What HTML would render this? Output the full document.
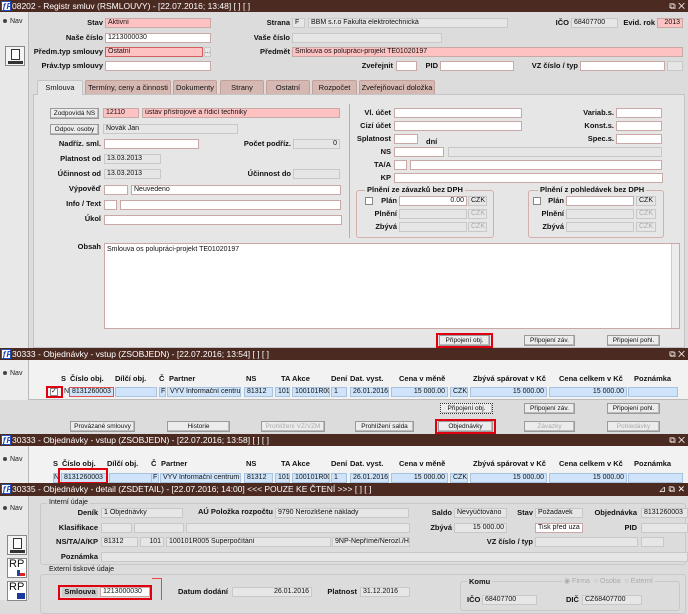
<!DOCTYPE html>
<html><head><meta charset="utf-8"><style>
*{box-sizing:border-box;margin:0;padding:0}
body{width:688px;height:600px;overflow:hidden;position:relative;background:#dcdcdc;font-family:"Liberation Sans",sans-serif;font-size:7.5px;color:#111}
div,span{position:absolute}
.t{left:0;width:688px;height:12px;background:#4b2a22;color:#fff;font-size:8.5px;line-height:12px;padding-left:12px;white-space:nowrap}
.t .lg{left:1px;top:1px;width:10px;height:10px;background:#fff;color:#1a3fb0;font-weight:bold;font-style:italic;font-size:8px;line-height:10px;text-align:center;padding:0;border:1px solid #2050c0}
.t .x{right:3px;top:0;color:#fff;font-size:9px}
.sb{left:0;width:29px;background:#e8e8e8;border-right:1px solid #b8b8b8}
.nav{left:3px;font-size:7px;color:#222}
.nav:before{content:"";display:inline-block;width:4px;height:4px;border-radius:50%;background:#444;margin-right:3px;vertical-align:middle}
.i{height:10px;background:#fff;border:1px solid #c9a9a5;line-height:8px;padding-left:2px;white-space:nowrap;overflow:hidden;font-size:7px}
.p{background:#ffc2c2}
.g{background:#e6e6e6;border-color:#c8c8c8}
.r{text-align:right;padding-right:2px}
.l{font-weight:bold;white-space:nowrap;text-align:right;font-size:7.5px;line-height:10px}
.b{height:11px;background:#ececec;border:1px solid #9a9a9a;text-align:center;line-height:9px;font-size:6.5px;box-shadow:inset -1px -1px 0 #bbb;white-space:nowrap;overflow:hidden}
.d{color:#aaa}
.rb{border:2px solid #e00010}
.tab{top:80px;height:14px;background:#d6b8b3;border:1px solid #c4a09a;border-bottom:none;text-align:center;line-height:13px;font-size:7.5px;border-radius:2px 2px 0 0;white-space:nowrap;overflow:hidden}
.fs{border:1px solid #d4b0ab;border-radius:3px}
.fl{font-weight:bold;background:#e6e6e6;padding:0 2px;font-size:7.5px;line-height:9px}
.h{font-weight:bold;font-size:7.5px;white-space:nowrap}
.c{height:10px;background:#cfe4fa;border:1px solid #a9c3de;line-height:8px;padding-left:2px;white-space:nowrap;overflow:hidden;font-size:7px}
.ck{width:8px;height:8px;background:#fff;border:1px solid #888}
</style></head><body>

<!-- Frame 1 -->
<div class="t" style="top:0"><span class="lg">ƒF</span>08202 - Registr smluv (RSMLOUVY) - [22.07.2016; 13:48] [ ] [ ]<span class="x">⧉ ✕</span></div>
<div class="sb" style="top:12px;height:336px"></div>
<div class="nav" style="top:18px">Nav</div>
<div style="left:5px;top:46px;width:20px;height:20px;background:#f4f4f4;border:1px solid #888"><div style="left:5px;top:2px;width:9px;height:11px;border:1px solid #333;background:#fff"></div><div style="left:2px;top:14px;width:15px;height:3px;background:#333"></div></div>

<div class="l" style="right:585px;top:18px">Stav</div><div class="i p" style="left:105px;top:18px;width:106px">Aktivní</div>
<div class="l" style="right:585px;top:33px">Naše číslo</div><div class="i" style="left:105px;top:33px;width:106px">1213000030</div>
<div class="l" style="right:585px;top:47px">Předm.typ smlouvy</div><div class="i p" style="left:105px;top:47px;width:98px;border-color:#d06060">Ostatní</div><div class="i g" style="left:204px;top:47px;width:7px;font-size:6px;padding:0">...</div>
<div class="l" style="right:585px;top:61px">Práv.typ smlouvy</div><div class="i" style="left:105px;top:61px;width:106px"></div>

<div class="l" style="right:398px;top:18px">Strana</div><div class="i g" style="left:292px;top:18px;width:13px">F</div><div class="i g" style="left:308px;top:18px;width:200px">BBM s.r.o Fakulta elektrotechnická</div>
<div class="l" style="right:119px;top:18px">IČO</div><div class="i g" style="left:571px;top:18px;width:47px">68407700</div>
<div class="l" style="right:33px;top:18px">Evid. rok</div><div class="i p r" style="left:657px;top:18px;width:26px">2013</div>
<div class="l" style="right:398px;top:33px">Vaše číslo</div><div class="i g" style="left:292px;top:33px;width:150px"></div>
<div class="l" style="right:398px;top:47px">Předmět</div><div class="i p" style="left:292px;top:47px;width:391px">Smlouva os polupráci-projekt TE01020197</div>
<div class="l" style="right:295px;top:61px">Zveřejnit</div><div class="i" style="left:396px;top:61px;width:21px"></div>
<div class="l" style="right:250px;top:61px">PID</div><div class="i" style="left:440px;top:61px;width:74px"></div>
<div class="l" style="right:110px;top:61px">VZ číslo / typ</div><div class="i" style="left:580px;top:61px;width:85px"></div><div class="i g" style="left:667px;top:61px;width:16px"></div>

<div style="left:33px;top:94px;width:652px;height:254px;background:#e6e6e6;border:1px solid #c4c4c4"></div>
<div class="tab" style="left:37px;width:46px;background:#e6e6e6;border-color:#c4c4c4;height:15px">Smlouva</div>
<div class="tab" style="left:85px;width:86px">Termíny, ceny a činnosti</div>
<div class="tab" style="left:173px;width:44px">Dokumenty</div>
<div class="tab" style="left:220px;width:44px">Strany</div>
<div class="tab" style="left:266px;width:44px">Ostatní</div>
<div class="tab" style="left:312px;width:45px">Rozpočet</div>
<div class="tab" style="left:359px;width:76px">Zveřejňovací doložka</div>

<div class="b" style="left:50px;top:108px;width:49px">Zodpovídá NS</div><div class="i p" style="left:103px;top:108px;width:36px">12110</div><div class="i p" style="left:142px;top:108px;width:198px">ústav přístrojové a řídicí techniky</div>
<div class="b" style="left:50px;top:124px;width:49px">Odpov. osoby</div><div class="i g" style="left:103px;top:124px;width:135px">Novák Jan</div>
<div class="l" style="right:587px;top:139px">Nadříz. sml.</div><div class="i" style="left:104px;top:139px;width:95px"></div>
<div class="l" style="right:397px;top:139px">Počet podříz.</div><div class="i g r" style="left:293px;top:139px;width:47px">0</div>
<div class="l" style="right:587px;top:154px">Platnost od</div><div class="i g" style="left:104px;top:154px;width:57px">13.03.2013</div>
<div class="l" style="right:587px;top:169px">Účinnost od</div><div class="i g" style="left:104px;top:169px;width:57px">13.03.2013</div>
<div class="l" style="right:397px;top:169px">Účinnost do</div><div class="i g" style="left:293px;top:169px;width:47px"></div>
<div class="l" style="right:587px;top:184px">Výpověď</div><div class="i" style="left:104px;top:185px;width:24px"></div><div class="i" style="left:131px;top:185px;width:210px">Neuvedeno</div>
<div class="l" style="right:587px;top:199px">Info / Text</div><div class="i" style="left:104px;top:200px;width:13px"></div><div class="i" style="left:120px;top:200px;width:221px"></div>
<div class="l" style="right:587px;top:214px">Úkol</div><div class="i" style="left:104px;top:215px;width:238px"></div>
<div style="left:349px;top:104px;width:1px;height:134px;background:#b0b0b0"></div>

<div class="l" style="right:297px;top:108px">Vl. účet</div><div class="i" style="left:394px;top:108px;width:128px"></div>
<div class="l" style="right:297px;top:121px">Cizí účet</div><div class="i" style="left:394px;top:121px;width:128px"></div>
<div class="l" style="right:297px;top:134px">Splatnost</div><div class="i" style="left:394px;top:134px;width:24px"></div><div class="l" style="left:426px;top:137px">dní</div>
<div class="l" style="right:297px;top:147px">NS</div><div class="i" style="left:394px;top:147px;width:50px"></div><div class="i g" style="left:448px;top:147px;width:214px"></div>
<div class="l" style="right:297px;top:160px">TA/A</div><div class="i" style="left:394px;top:160px;width:13px"></div><div class="i" style="left:410px;top:160px;width:252px"></div>
<div class="l" style="right:297px;top:173px">KP</div><div class="i" style="left:394px;top:173px;width:269px"></div>
<div class="l" style="right:74px;top:108px">Variab.s.</div><div class="i" style="left:616px;top:108px;width:46px"></div>
<div class="l" style="right:74px;top:121px">Konst.s.</div><div class="i" style="left:616px;top:121px;width:46px"></div>
<div class="l" style="right:74px;top:134px">Spec.s.</div><div class="i" style="left:616px;top:134px;width:46px"></div>

<div class="fs" style="left:356px;top:190px;width:138px;height:48px"></div><div class="fl" style="left:365px;top:185px">Plnění ze závazků bez DPH</div>
<div class="ck" style="left:365px;top:197px"></div><div class="l" style="right:291px;top:196px">Plán</div><div class="i r" style="left:399px;top:196px;width:68px">0.00</div><div class="i g" style="left:468px;top:196px;width:19px">CZK</div>
<div class="l" style="right:291px;top:209px">Plnění</div><div class="i g" style="left:399px;top:209px;width:68px"></div><div class="i g d" style="left:468px;top:209px;width:19px">CZK</div>
<div class="l" style="right:291px;top:222px">Zbývá</div><div class="i g" style="left:399px;top:222px;width:68px"></div><div class="i g d" style="left:468px;top:222px;width:19px">CZK</div>
<div class="fs" style="left:528px;top:190px;width:136px;height:48px"></div><div class="fl" style="left:538px;top:185px">Plnění z pohledávek bez DPH</div>
<div class="ck" style="left:533px;top:197px"></div><div class="l" style="right:124px;top:196px">Plán</div><div class="i" style="left:566px;top:196px;width:68px"></div><div class="i g" style="left:636px;top:196px;width:20px">CZK</div>
<div class="l" style="right:124px;top:209px">Plnění</div><div class="i g" style="left:566px;top:209px;width:68px"></div><div class="i g d" style="left:636px;top:209px;width:20px">CZK</div>
<div class="l" style="right:124px;top:222px">Zbývá</div><div class="i g" style="left:566px;top:222px;width:68px"></div><div class="i g d" style="left:636px;top:222px;width:20px">CZK</div>

<div class="l" style="right:587px;top:242px">Obsah</div>
<div class="i" style="left:104px;top:243px;width:576px;height:86px;line-height:12px">Smlouva os polupráci-projekt TE01020197</div>
<div style="left:671px;top:244px;width:8px;height:84px;background:#ececec;border-left:1px solid #ccc"></div>

<div class="rb" style="left:436px;top:333px;width:57px;height:15px"></div>
<div class="b" style="left:439px;top:335px;width:51px">Připojení obj.</div>
<div class="b" style="left:524px;top:335px;width:51px">Připojení záv.</div>
<div class="b" style="left:607px;top:335px;width:53px">Připojení pohl.</div>

<!-- Frame 2 -->
<div class="t" style="top:348px"><span class="lg">ƒF</span>30333 - Objednávky - vstup (ZSOBJEDN) - [22.07.2016; 13:54] [ ] [ ]<span class="x">⧉ ✕</span></div>
<div style="left:0;top:360px;width:688px;height:40px;background:#f2f2f2;border-bottom:1px solid #bbb"></div>
<div class="sb" style="top:360px;height:40px;background:#ececec"></div>
<div class="nav" style="top:370px">Nav</div>
<div class="h" style="left:61px;top:374px">S</div><div class="h" style="left:70px;top:374px">Číslo obj.</div><div class="h" style="left:115px;top:374px">Dílčí obj.</div><div class="h" style="left:159px;top:374px">Č</div><div class="h" style="left:169px;top:374px">Partner</div><div class="h" style="left:246px;top:374px">NS</div><div class="h" style="left:281px;top:374px">TA Akce</div><div class="h" style="left:331px;top:374px">Dení</div><div class="h" style="left:350px;top:374px">Dat. vyst.</div><div class="h" style="left:399px;top:374px">Cena v měně</div><div class="h" style="left:473px;top:374px">Zbývá spárovat v Kč</div><div class="h" style="left:559px;top:374px">Cena celkem v Kč</div><div class="h" style="left:634px;top:374px">Poznámka</div>
<div class="rb" style="left:46px;top:386px;width:17px;height:12px"></div><div class="ck" style="left:50px;top:388px;font-size:7px;line-height:6px">✓</div>
<div style="left:64px;top:388px;font-size:7px">N</div>
<div class="c" style="left:69px;top:387px;width:45px;border-color:#e05050">8131260003</div>
<div class="c" style="left:115px;top:387px;width:42px"></div>
<div class="c" style="left:159px;top:387px;width:7px;padding:0 1px">F</div>
<div class="c" style="left:167px;top:387px;width:74px">VYV Informační centrum</div>
<div class="c" style="left:244px;top:387px;width:29px">81312</div>
<div class="c" style="left:275px;top:387px;width:15px">101</div>
<div class="c" style="left:292px;top:387px;width:38px">100101R005</div>
<div class="c" style="left:331px;top:387px;width:16px">1</div>
<div class="c" style="left:350px;top:387px;width:39px">26.01.2016</div>
<div class="c r" style="left:391px;top:387px;width:57px">15 000.00</div>
<div class="c" style="left:450px;top:387px;width:18px">CZK</div>
<div class="c r" style="left:470px;top:387px;width:77px">15 000.00</div>
<div class="c r" style="left:549px;top:387px;width:78px">15 000.00</div>
<div class="c" style="left:628px;top:387px;width:50px"></div>
<div class="b" style="left:440px;top:403px;width:53px;border-style:dotted;border-color:#333">Připojení obj.</div>
<div class="b" style="left:524px;top:403px;width:51px">Připojení záv.</div>
<div class="b" style="left:607px;top:403px;width:53px">Připojení pohl.</div>
<div class="b" style="left:70px;top:421px;width:65px">Provázané smlouvy</div>
<div class="b" style="left:167px;top:421px;width:63px">Historie</div>
<div class="b d" style="left:261px;top:421px;width:64px">Prohlížení VZ/VZM</div>
<div class="b" style="left:355px;top:421px;width:59px">Prohlížení salda</div>
<div class="rb" style="left:435px;top:419px;width:61px;height:15px"></div>
<div class="b" style="left:438px;top:421px;width:55px">Objednávky</div>
<div class="b d" style="left:524px;top:421px;width:51px">Závazky</div>
<div class="b d" style="left:607px;top:421px;width:53px">Pohledávky</div>

<!-- Frame 3 -->
<div class="t" style="top:434px"><span class="lg">ƒF</span>30333 - Objednávky - vstup (ZSOBJEDN) - [22.07.2016; 13:58] [ ] [ ]<span class="x">⧉ ✕</span></div>
<div style="left:0;top:446px;width:688px;height:38px;background:#f2f2f2"></div>
<div class="sb" style="top:446px;height:38px;background:#ececec"></div>
<div class="nav" style="top:456px">Nav</div>
<div class="h" style="left:53px;top:459px">S</div><div class="h" style="left:62px;top:459px">Číslo obj.</div><div class="h" style="left:107px;top:459px">Dílčí obj.</div><div class="h" style="left:151px;top:459px">Č</div><div class="h" style="left:161px;top:459px">Partner</div><div class="h" style="left:246px;top:459px">NS</div><div class="h" style="left:281px;top:459px">TA Akce</div><div class="h" style="left:331px;top:459px">Dení</div><div class="h" style="left:350px;top:459px">Dat. vyst.</div><div class="h" style="left:399px;top:459px">Cena v měně</div><div class="h" style="left:473px;top:459px">Zbývá spárovat v Kč</div><div class="h" style="left:559px;top:459px">Cena celkem v Kč</div><div class="h" style="left:634px;top:459px">Poznámka</div>
<div class="c" style="left:53px;top:473px;width:7px;padding:0">N</div>
<div class="c" style="left:61px;top:473px;width:46px">8131260003</div>
<div class="c" style="left:109px;top:473px;width:47px"></div>
<div class="c" style="left:151px;top:473px;width:8px;padding:0 1px;left:151px">F</div>
<div class="c" style="left:160px;top:473px;width:81px">VYV Informační centrum</div>
<div class="c" style="left:244px;top:473px;width:29px">81312</div>
<div class="c" style="left:275px;top:473px;width:15px">101</div>
<div class="c" style="left:292px;top:473px;width:38px">100101R005</div>
<div class="c" style="left:331px;top:473px;width:16px">1</div>
<div class="c" style="left:350px;top:473px;width:39px">26.01.2016</div>
<div class="c r" style="left:391px;top:473px;width:57px">15 000.00</div>
<div class="c" style="left:450px;top:473px;width:18px">CZK</div>
<div class="c r" style="left:470px;top:473px;width:77px">15 000.00</div>
<div class="c r" style="left:549px;top:473px;width:78px">15 000.00</div>
<div class="c" style="left:628px;top:473px;width:55px"></div>
<div class="rb" style="left:58px;top:468px;width:50px;height:16px"></div>

<!-- Frame 4 -->
<div class="t" style="top:483px;height:13px;line-height:13px"><span class="lg">ƒF</span>30335 - Objednávky - detail (ZSDETAIL) - [22.07.2016; 14:00] &lt;&lt;&lt; POUZE KE ČTENÍ &gt;&gt;&gt; [ ] [ ]<span class="x">⊿ ⧉ ✕</span></div>
<div class="sb" style="top:496px;height:104px"></div>
<div class="nav" style="top:505px">Nav</div>
<div style="left:7px;top:535px;width:20px;height:20px;background:#f4f4f4;border:1px solid #888"><div style="left:5px;top:2px;width:9px;height:11px;border:1px solid #333;background:#fff"></div><div style="left:2px;top:14px;width:15px;height:3px;background:#333"></div></div>
<div style="left:7px;top:558px;width:20px;height:20px;background:#fff;border:1px solid #888;font-size:11px;line-height:11px;padding-left:1px">RP<div style="right:1px;bottom:1px;width:8px;height:6px;background:linear-gradient(#fff 50%,#d22 50%);border-left:3px solid #1a4aa0"></div></div>
<div style="left:7px;top:581px;width:20px;height:20px;background:#fff;border:1px solid #888;font-size:11px;line-height:11px;padding-left:1px">RP<div style="right:1px;bottom:1px;width:8px;height:6px;background:#1a3a9a"></div></div>

<div class="fs" style="left:40px;top:503px;width:646px;height:62px;border-color:#c8c8c8"></div><div style="left:47px;top:499px;background:#dcdcdc;padding:0 2px;font-size:7px">Interní údaje</div>
<div class="l" style="right:590px;top:508px">Deník</div><div class="i g" style="left:101px;top:508px;width:82px">1 Objednávky</div>
<div class="l" style="right:415px;top:507px">AÚ Položka rozpočtu</div><div class="i g" style="left:275px;top:508px;width:134px">9790 Nerozlišené náklady</div>
<div class="l" style="right:236px;top:508px">Saldo</div><div class="i g" style="left:454px;top:508px;width:53px">Nevyúčtováno</div>
<div class="l" style="right:155px;top:508px">Stav</div><div class="i g" style="left:535px;top:508px;width:48px">Požadavek</div>
<div class="l" style="right:51px;top:508px">Objednávka</div><div class="i g" style="left:641px;top:508px;width:47px">8131260003</div>
<div class="l" style="right:590px;top:523px">Klasifikace</div><div class="i g" style="left:101px;top:523px;width:31px"></div><div class="i g" style="left:134px;top:523px;width:50px"></div><div class="i g" style="left:186px;top:523px;width:224px"></div>
<div class="l" style="right:236px;top:523px">Zbývá</div><div class="i g r" style="left:454px;top:523px;width:53px">15 000.00</div>
<div class="i" style="left:535px;top:523px;width:48px">Tisk před uza</div>
<div class="l" style="right:51px;top:523px">PID</div><div class="i g" style="left:641px;top:523px;width:47px"></div>
<div class="l" style="right:590px;top:537px">NS/TA/A/KP</div><div class="i g" style="left:101px;top:537px;width:37px">81312</div><div class="i g r" style="left:140px;top:537px;width:24px">101</div><div class="i g" style="left:166px;top:537px;width:165px">100101R005 Superpočítání</div><div class="i g" style="left:332px;top:537px;width:78px">9NP-Nepřímé/Nerozl./H</div>
<div class="l" style="right:155px;top:537px">VZ číslo / typ</div><div class="i g" style="left:535px;top:537px;width:103px"></div><div class="i g" style="left:641px;top:537px;width:23px"></div>
<div class="l" style="right:590px;top:552px">Poznámka</div><div class="i g" style="left:101px;top:552px;width:587px"></div>
<div class="fs" style="left:40px;top:574px;width:646px;height:40px;border-color:#c8c8c8"></div><div style="left:47px;top:566px;background:#dcdcdc;padding:0 2px;font-size:7px">Externí tiskové údaje</div>
<div class="rb" style="left:58px;top:585px;width:94px;height:15px"></div>
<div class="l" style="left:62px;top:587px;width:36px;background:#ccc;text-align:center">Smlouva</div><div class="i" style="left:100px;top:587px;width:50px">1213000030</div>
<div style="left:152px;top:578px;width:10px;height:22px;border:1px solid #e44;border-left:none;border-bottom:none"></div>
<div class="l" style="right:460px;top:587px">Datum dodání</div><div class="i g r" style="left:232px;top:587px;width:80px">26.01.2016</div>
<div class="l" style="right:331px;top:587px">Platnost</div><div class="i g" style="left:360px;top:587px;width:50px">31.12.2016</div>
<div class="fs" style="left:460px;top:581px;width:220px;height:30px;border-color:#c8c8c8"></div>
<div class="fl" style="left:467px;top:577px;background:#dcdcdc">Komu</div>
<div style="left:562px;top:577px;background:#dcdcdc;color:#aaa;font-size:7px;padding:0 2px">◉ Firma &nbsp;○ Osoba &nbsp;○ Externí</div>
<div class="l" style="left:467px;top:595px">IČO</div><div class="i g" style="left:482px;top:595px;width:55px">68407700</div>
<div class="l" style="left:566px;top:595px">DIČ</div><div class="i g" style="left:582px;top:595px;width:60px">CZ68407700</div>
</body></html>
